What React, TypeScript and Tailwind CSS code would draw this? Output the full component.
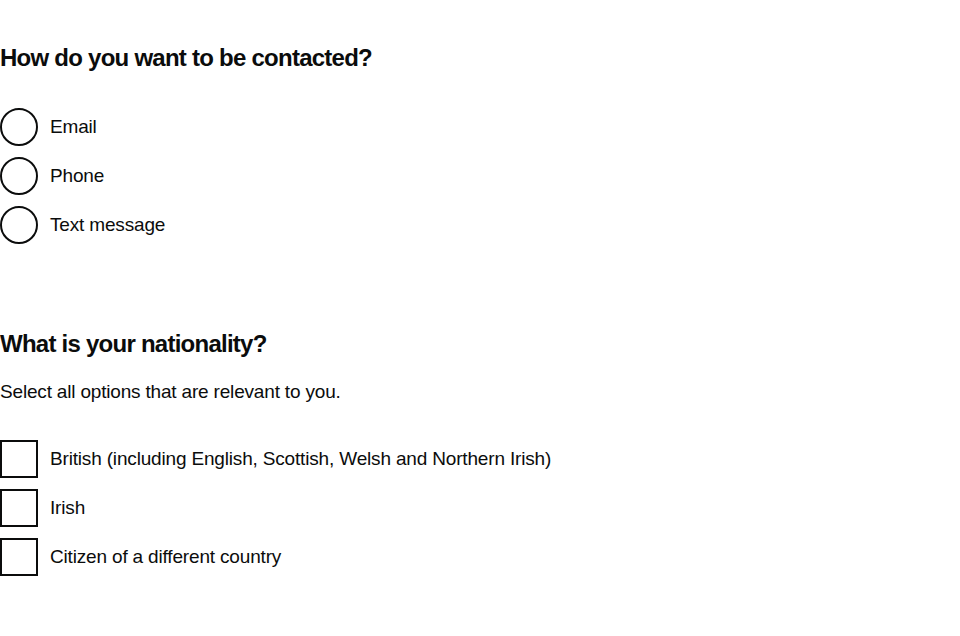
import React from "react";

const font = { fontFamily: '"Liberation Sans", Arial, sans-serif' };

function Radio({ label }: { label: string }) {
  return (
    <label className="flex items-center h-[38px]">
      <span className="w-[38px] h-[38px] rounded-full border-2 border-[#0b0c0c] shrink-0" />
      <span className="ml-[12px] -mt-[1px] text-[19px] leading-[25px] tracking-[-0.17px]">{label}</span>
    </label>
  );
}

function Checkbox({ label }: { label: string }) {
  return (
    <label className="flex items-center h-[38px]">
      <span className="w-[38px] h-[38px] border-2 border-[#0b0c0c] shrink-0" />
      <span className="ml-[12px] -mt-[2px] text-[19px] leading-[25px] tracking-[-0.17px]">{label}</span>
    </label>
  );
}

export default function App() {
  return (
    <div className="min-h-[636px] w-[960px] bg-white text-[#0b0c0c]" style={font}>
      <div className="pt-[43px]">
        <h2 className="text-[24px] leading-[30px] font-bold tracking-[-0.75px]">How do you want to be contacted?</h2>
        <div className="mt-[35px] flex flex-col gap-[11px]">
          <Radio label="Email" />
          <Radio label="Phone" />
          <Radio label="Text message" />
        </div>

        <h2 className="mt-[85px] text-[24px] leading-[30px] font-bold tracking-[-0.75px]">What is your nationality?</h2>
        <p className="mt-[20px] text-[19px] leading-[25px] tracking-[-0.18px]">Select all options that are relevant to you.</p>
        <div className="mt-[36px] flex flex-col gap-[11px]">
          <Checkbox label="British (including English, Scottish, Welsh and Northern Irish)" />
          <Checkbox label="Irish" />
          <Checkbox label="Citizen of a different country" />
        </div>
      </div>
    </div>
  );
}
